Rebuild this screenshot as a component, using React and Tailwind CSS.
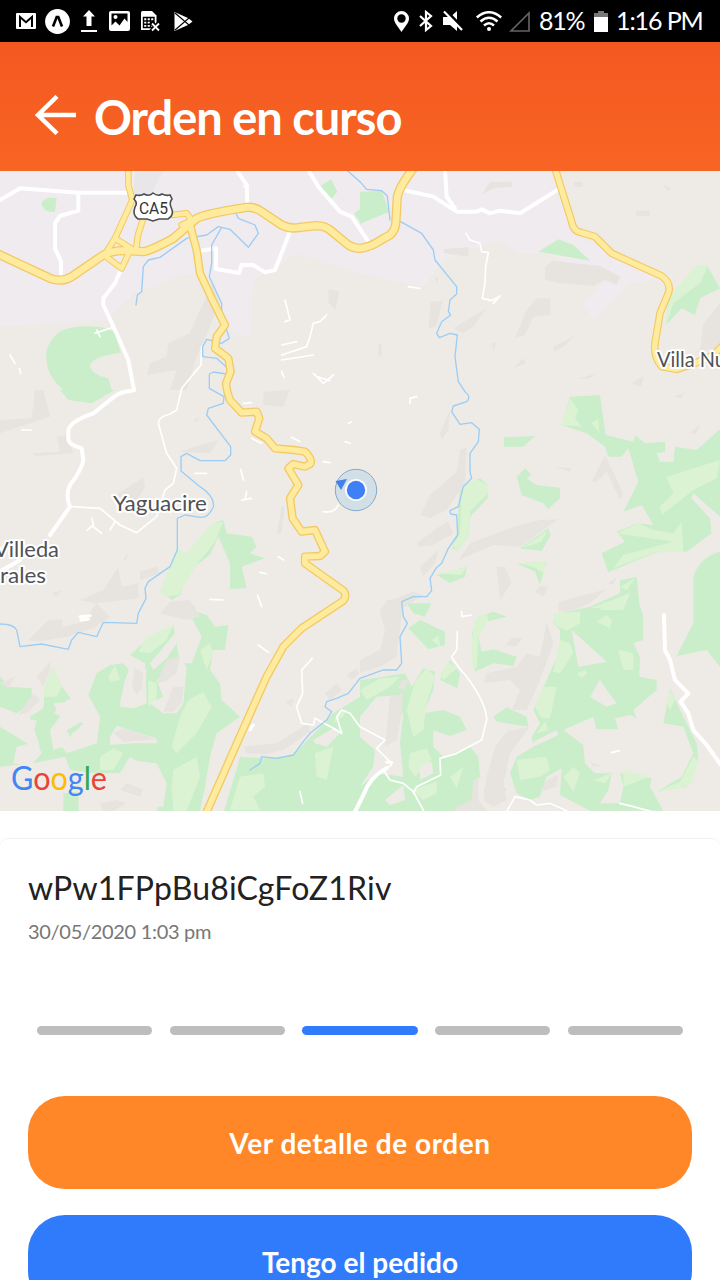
import React from "react";

/* Map sectors are drawn in thirds of a pixel, each with its own origin. */
const Sector = ({ x = 0, y = 0, children }) => <g transform={`translate(${x} ${y})`}>{children}</g>;

const G = ({ d }) => <path d={d} fill="#caeeca" />;
const L = ({ d }) => <path d={d} fill="#dbf3d3" />;
const S = ({ d }) => <path d={d} fill="#e7e3df" />;
const B = ({ d }) => <path d={d} fill="#eeebe7" />;

function Terrain() {
  return (
    <>
      <Sector>
        <path fill="#efebef" d="M0 0H1680L1720 190L1840 260L2030 320L1890 340L1780 450L1750 400L1820 330L1640 250L1560 250L1500 210L1330 270L1270 350L1080 310L890 250L760 330L750 500L670 480L640 330L560 310L400 370L320 450L0 470Z" />
        <path fill="#e8e6e8" d="M405 0H490L455 70L400 75Z" />
        <S d="M640 340L660 400L590 560L560 660H510L530 600L440 615L450 580L500 560L505 520L570 490L590 440ZM985 358L1018 365L1005 420L985 395Z" />
        <G d="M140 540Q160 480 220 472Q310 460 345 490L362 548Q270 560 270 590Q280 615 325 625L335 660H190Q130 610 140 540ZM124 100Q140 75 170 85L165 125Q130 130 124 100ZM958 50L993 28L1012 65L990 92ZM1062 130L1080 118V155Z" />
      </Sector>
      <Sector x={1080}>
        <G d="M0 65L65 62L88 125L0 162ZM535 245L595 208L640 225L690 272L610 258ZM918 465L925 385L1010 290L1040 285L1080 355L1020 385L1005 435L965 415Z" />
        <L d="M918 465L928 380L1010 285L1045 285L1020 340L940 400Z" />
        <S d="M365 75L390 35L455 35L455 50L400 55ZM250 238L325 232L325 260L255 250ZM555 290L580 273L720 288L780 320L770 345L735 330L700 348L600 340L555 330ZM825 122H870V138H830ZM205 475L212 395L248 392L228 470ZM280 475L380 415L340 470L310 490ZM500 420L530 385H570L572 435L520 440L495 495L465 503ZM580 530L648 495L610 530L580 545ZM460 595L490 565L497 580ZM650 628L710 610L690 625ZM815 640L850 618L845 650ZM1020 540L1030 460L1080 400V530L1000 550Z" />
        <S d="M395 520L410 515L400 545ZM55 525L65 520V560H55ZM225 320L235 325L230 345ZM640 35H668V50H645ZM905 45L935 55L925 62Z" />
      </Sector>
      <Sector y={660}>
        <G d="M180 0H345L275 40L205 30ZM485 600L500 560L640 400L670 390L680 430L755 440L770 470L750 490L795 505L725 530L740 595L690 597L690 520L655 440L630 495L590 525L560 560L540 615L515 630Z" />
        <L d="M480 605L530 475L560 490L635 400L670 395L645 455L585 530L535 615L495 620Z" />
        <S d="M0 90L95 85L105 0H130L150 80L90 100L0 130ZM95 190L180 185L170 140L200 135L220 190L110 198ZM340 320L430 262L435 290L405 340ZM540 185L600 165L655 150L630 190ZM790 5L870 0L850 50L790 45ZM240 630L310 600L355 530L365 590L415 580L415 625L290 640ZM420 570L420 545L470 530L480 550ZM155 610L185 600L170 620ZM830 435L845 350L855 350L845 425ZM370 510L385 485L380 510ZM580 90L600 80L590 95ZM500 660L560 630L590 655Z" />
      </Sector>
      <Sector x={1080} y={660}>
        <G d="M605 105L630 20L720 15L737 135L820 155L825 135L855 160L915 155L915 185L890 190L900 215H940L945 170L1010 180L1080 118V380L1000 310L1055 385L1055 430L980 485L890 487L745 547L725 490L795 455L770 425L830 400L880 405L845 345L790 365L835 275L805 175L785 200H745L735 170L680 130ZM432 142L525 138L490 170H432ZM470 260L495 235L515 255L500 265L530 285L600 293L600 325L565 358L550 340L485 315ZM300 290L360 265L385 285L383 325L330 380L325 440L295 480L275 475L290 440ZM480 475L565 415L572 435L545 483ZM470 520L560 515L540 585L525 545ZM230 555L320 530L315 560L270 580ZM1000 560Q1020 500 1080 485V830L1040 780L950 798L1000 700ZM690 650L780 610L780 570L830 560L838 640L850 680V750L820 760L840 800L838 860L890 870V900L820 960L830 985L810 975L765 985L775 1018H710L700 980L610 1020L670 1065L675 1120L705 1150L755 1150L745 1200L720 1240L780 1240L790 1190L780 1150L875 1165L870 1190L910 1262H690L600 1215L605 1135L560 1160L540 1220L510 1230L470 1210L450 1150L470 1100L520 1070L515 1040L540 1000L520 960L600 780L600 720L580 700L600 670Z" />
        <L d="M605 105L630 25L655 60L645 85L665 110ZM695 100L715 85L718 130ZM920 260L1080 210L1070 265L1000 300L905 375L900 350L940 310ZM770 430L835 400L880 420L940 430L965 395L970 487L890 485L760 535L790 495L940 455ZM305 290L350 268L385 285L383 310L330 365L325 440L295 480L278 470L300 430ZM485 475L565 420L545 455ZM470 520L558 515L550 550L520 530ZM235 550L318 532L305 555ZM690 655L760 630L780 650ZM780 590L825 565L800 600Z" />
        <B d="M635 720L740 815L655 830ZM720 870L755 920L770 940L740 950L690 920ZM1000 310L1060 385L1070 410L1055 430L1050 385L995 325ZM520 1055L590 1020L595 1035L520 1070Z" />
        <L d="M600 750L630 760L640 790L600 850L580 845ZM580 670L660 665L660 700L620 722L585 705ZM710 695L740 675L755 690L750 715ZM775 780L820 790L820 840L790 840ZM525 950L550 890L590 890L570 985L545 985ZM650 850L675 840L680 850L665 865ZM470 1110L560 1100L570 1140L540 1160L480 1170ZM610 1160L640 1130L660 1150L640 1205ZM700 1170L755 1150L735 1180ZM790 1140L870 1160L790 1190ZM730 640L810 610L790 660H720Z" />
        <S d="M295 510L330 460L460 410L540 390L595 388L480 470L400 465ZM170 460L230 415L265 395L280 430L220 465L175 470ZM180 375L210 315L290 245L300 180L320 170L315 280L260 360L210 385ZM180 530L235 480L225 520L190 560ZM240 130L270 60L265 120L245 150ZM585 230L635 235L630 245ZM695 275L735 195L790 310L780 330L740 245L710 275ZM595 635L740 598L690 640L630 665H595ZM940 20L975 8L965 25ZM990 130L1020 102L1010 130ZM410 530L435 530L455 580L420 630ZM60 660L80 635L160 605L190 615L120 660ZM525 605L540 588L565 590L550 620ZM745 580L770 560L760 585Z" />
      </Sector>
      <Sector y={1290}>
        <G d="M0 230L30 260L95 265L95 310L50 340L0 320ZM0 380L50 410L80 430L120 440L90 350L130 325L135 260L160 200L180 250L218 305L160 310L180 350L150 390L160 450L220 430L200 390L250 362L255 375L215 400L210 440L290 430L300 350L265 285L290 220L330 195L370 190L395 220L370 280L360 320L400 325L440 310L435 190L390 165L440 120L520 75L530 130L540 190L575 190L605 110L560 25L620 45L645 80L685 75L675 150L640 150L630 210L660 250L665 300L720 350L650 400L630 470L615 560L600 633H470L490 550L440 500L390 470L360 520L280 520L210 510L195 470L100 490L0 500Z" />
        <L d="M415 155L440 110L520 75L500 120L450 160ZM130 270L160 200L185 260L170 290L135 290ZM325 230L345 195L360 240L330 245ZM565 300L610 275L635 320L590 400L530 460L515 440L540 350ZM520 510L590 470L600 530L560 633H520L515 560ZM300 470L340 445L370 460L340 510H300ZM600 150L630 130L640 160L620 210ZM445 240L470 250L470 300L445 320Z" />
        <B d="M375 240L390 200L440 210L430 290L390 325L360 310ZM450 190L500 130L525 100L530 130L500 175L460 210ZM470 240L540 170L560 200L550 310L530 340L490 340L450 310L490 290ZM160 340L200 300L265 290L300 350L290 430L200 460L185 440L250 370ZM0 330L50 360L110 360L100 400L50 410ZM50 440L110 425L125 460L90 500L40 490ZM330 410L350 378L470 415L470 430L400 430L330 435ZM380 480L470 490L500 550L490 620H330L300 570L350 530L390 520L440 540Z" />
        <G d="M720 470L800 475L880 465L1000 340L1080 290V640H670L700 540ZM190 580L235 575V633H190Z" />
        <B d="M940 420L1000 385L1020 400L980 440L945 430Z" />
        <L d="M720 530L790 520L795 560L760 590L780 630H690ZM945 460L1000 440L980 540L950 530ZM1010 345L1040 325L1030 350L1000 370Z" />
        <S d="M85 120L145 60L185 58L190 80L250 65L290 10L330 50L280 85L200 110L110 125ZM110 230L150 185L150 210L130 260ZM0 250L45 230L25 265ZM55 345L100 280L120 300L80 340ZM395 260L405 205L430 220L425 265L410 285ZM470 250L500 180L540 170L530 220L495 245ZM490 335L520 260L550 260L545 310L520 335ZM340 400L370 385L470 418L370 425ZM480 40L510 5L570 0L600 50L560 60ZM730 440L830 430L925 370L930 395L850 450L800 462L740 460ZM1040 225L1070 205L1078 220L1055 240ZM975 280L1010 250L1025 270L990 300ZM855 305L880 295L875 320ZM360 570L380 550L430 570L420 590ZM300 610L350 600L380 610L340 633H310Z" />
      </Sector>
      <Sector x={1080} y={1290}>
        <G d="M0 240L40 235L135 220L155 260L190 205L225 215L220 270L190 340L250 330L300 350L320 390L270 408L220 390L220 440L250 470L330 440L355 470L360 530L340 560L340 633H0V560L50 520L130 530L120 430L130 340L85 340L90 310L130 285L50 290L0 350ZM140 10H215L195 50L160 40ZM145 85L180 60L255 95L255 135L205 148ZM345 215L335 100L355 50L400 35L440 50L380 65L355 110L365 155L400 148L470 170L460 198L400 190ZM240 240L270 180L300 220L292 265ZM400 350L440 322L500 350L505 380L410 365ZM370 570L410 535L440 570L390 600ZM0 410L45 450L40 500L0 560ZM910 370L930 265L970 350L1010 430L1015 480L980 560L890 575L965 530L1000 460L970 380Z" />
        <L d="M335 120L345 55L380 42L385 60L355 110L350 205L335 195ZM140 330L165 245L200 205L225 230L200 310L190 390L160 410ZM0 270L60 235L120 230L90 260L20 300ZM150 460L200 445L215 480L165 530L145 500ZM155 570L230 545L230 580L190 600ZM270 530L310 500L290 565ZM920 310L930 270L945 300L930 330ZM890 575L960 545L1000 470L1015 480L995 550L960 565ZM240 220L265 185L290 205L250 240ZM215 120L235 105L240 140ZM530 400L555 365L565 390Z" />
        <B d="M75 600L130 555L135 600L90 615ZM180 500L215 485L220 520L180 540Z" />
        <S d="M60 40L80 0H130L110 170L60 200L0 218V180L60 150L75 90ZM370 250L380 220L470 200L500 160L540 170L560 65L580 130L540 240L500 330L455 330L480 270L450 240ZM435 135L455 115L490 112L465 140ZM380 530L405 440L440 395L510 380L450 460L430 550L440 600L400 620L370 600ZM540 575L560 540L595 525L590 560ZM75 440L90 290L130 280L125 340L110 420ZM335 600L340 540L355 530L355 600L380 633H280L300 615ZM115 265L125 240L145 240L135 270ZM700 500L690 485L730 500Z" />
      </Sector>
    </>
  );
}

const HIGHWAY = "M-10 250L150 325Q185 338 215 320L310 255Q340 240 380 242L430 245Q450 243 520 205L590 145Q620 130 740 112Q765 110 785 125L845 165Q870 178 900 172L950 167Q975 168 990 180L1045 225Q1060 235 1080 235Q1110 232 1140 212L1170 195Q1188 180 1188 150L1192 80Q1198 50 1240 -5";
const RAMPS = "M385 -5V45L397 90L345 205L318 248M345 205L400 240M318 260L365 295L387 248M430 145L414 195L408 240M515 135L560 130L575 150L545 165";
const SOUTH = "M570 165L590 240L600 310L635 385L675 465L650 500L645 535L685 565L692 605L678 640L682 665L690 690L725 728L770 725L778 745L765 785L800 805L825 835L880 840L915 845Q940 870 930 882L915 890L880 882L865 895L895 945L870 985L878 1045L905 1085L945 1080L975 1145L960 1158L915 1160L915 1180L1030 1262Q1042 1275 1030 1292L905 1375L850 1430L800 1520L735 1665L618 1930";
const EAST = "M1665 -5L1715 155Q1720 185 1745 188L1785 200L1835 250L1985 318Q2015 340 2005 370L1980 430L1965 520Q1960 560 1985 590L2030 598L2080 582L2140 555L2170 525";

function Roads() {
  return (
    <g fill="none" strokeLinejoin="round" strokeLinecap="round">
      <g stroke="#fff" strokeWidth="12">
        <path d="M0 90L60 55L235 68L385 68M235 75L235 122L180 138L165 160V235L183 275V315M710 0L740 45L742 100M925 0L955 50L1020 125L1055 140L1085 185L1105 215M603 242L648 235V297L717 309L725 285L760 285L795 307L825 300L868 190M363 298L345 340L310 385L310 405L345 480L385 570L402 660L395 662Q360 665 340 682L280 730Q205 755 205 785V810Q210 825 245 835L250 870Q245 900 210 945Q195 975 210 1010L150 1095M0 1205L60 1170M1210 60L1300 80L1370 125L1430 125L1445 118L1470 130L1500 122L1560 130L1600 105L1680 55M1335 0L1340 80L1365 115" />
        <path d="M1992 1335L1995 1440L2010 1470L2025 1530L2065 1570L2042 1595L2065 1630L2080 1680L2120 1725L2170 1795M1160 1795Q1110 1820 1090 1875L1065 1925" />
      </g>
      <g stroke="#fff" strokeWidth="5">
        <path d="M340 472L285 490M290 480L300 500M605 530L603 585L545 655L530 720L510 732Q475 740 475 760L500 850L530 895L520 940L495 960L470 1040L410 1088L360 1065L300 1015L215 1010M262 1080L280 1065L275 1045M280 1070L305 1090M330 1080L345 1055M855 390L870 450L855 455M980 435L960 455L940 460L930 500L920 530L845 555M845 525L890 515M845 570L940 555M940 610L970 640L1000 615M950 620L990 632M1398 190L1410 210L1440 220L1445 245L1465 248L1457 290L1455 340L1447 385L1475 392L1500 378L1480 400M1225 350L1260 355M970 1025Q1005 1030 1015 1005M630 1288L670 1290M772 1275L785 1310M775 1425L805 1447M722 898L730 930M740 965L735 990M730 50L745 45M937 1465L905 1500L908 1570L890 1610L905 1660L940 1665L945 1645L1000 1675L1025 1690M1025 1690L1010 1640L1025 1620L1050 1630L1080 1670L1155 1710L1130 1735L1165 1770L1175 1785L1150 1800L1170 1830L1210 1840L1240 1865L1275 1930M1372 1385L1370 1440L1355 1460Q1365 1480 1400 1520Q1460 1600 1460 1650L1445 1710L1370 1750L1320 1765L1322 1815L1250 1850L1240 1870M1385 1325V1340L1415 1335M1520 1925L1545 1880L1590 1890L1610 1905L1650 1900L1700 1922M1860 1900L1900 1910L1955 1925M1835 1748L1858 1742M65 780H95M585 910H620M900 1865L908 1900" />
        <path d="M730 700L755 698M755 805L785 820M875 802L900 815M30 555L45 580M58 595L62 610M1045 760L1055 755M1035 815L1050 820M725 990L755 985M835 1160L850 1170M780 1207L800 1212M970 875L990 878M1230 700V685L1250 680M845 605L852 622" />
        <path strokeWidth="9" d="M240 1340L270 1337M243 1350L265 1348M750 1680L760 1665M1160 1777H1175" />
      </g>
      <g stroke="#9ccdf4" strokeWidth="4">
        <path d="M408 405L412 375L425 365L430 290L445 270L480 262L560 205L620 195L655 170L690 178L745 232L775 190L765 165L715 145L708 130M665 172L635 225L635 280L628 320L665 400L665 430M680 480L688 505L665 520L620 508L608 530L608 560L650 565L678 590M680 612L640 606L628 612V655L672 680L670 700L625 715L620 735L692 830V855L675 872H600L560 850L543 860V903L600 950Q645 980 640 1010Q625 1045 600 1042L555 1035L532 1045V1140L510 1190L445 1235L435 1255L438 1285L415 1330L410 1360L310 1357L290 1400L235 1387L215 1410L205 1438L125 1422L60 1430L50 1380Q40 1362 0 1362" />
        <path d="M1040 0L1080 35L1100 58L1145 62L1162 78L1170 150M1202 155L1265 190L1300 240L1305 270L1370 350V372L1350 390L1345 425L1352 435L1325 455L1310 490L1318 503L1350 490L1372 495L1365 560L1375 635L1395 665Q1415 680 1400 695L1360 708L1355 725L1380 763L1415 758L1438 778L1435 815L1410 850V905L1415 925L1390 950L1375 1010L1350 1022L1352 1032L1370 1035L1373 1095L1345 1135L1325 1180L1308 1195L1290 1225L1295 1262L1280 1280L1240 1280L1205 1295L1210 1340L1222 1360L1200 1400L1205 1480L1190 1500L1150 1500L1080 1525L1045 1570L1010 1585L980 1595L975 1610L995 1625L980 1650L930 1690L910 1715L880 1755L830 1765L785 1760L780 1780L750 1800" />
      </g>
      <g stroke="#f4c964">
        <path strokeWidth="20" d={RAMPS} />
        <path strokeWidth="28" d={HIGHWAY} />
        <path strokeWidth="25" d={SOUTH} />
        <path strokeWidth="23" d={EAST} />
      </g>
      <g stroke="#feeb9d">
        <path strokeWidth="14" d={RAMPS} />
        <path strokeWidth="20" d={HIGHWAY} />
        <path strokeWidth="17" d={SOUTH} />
        <path strokeWidth="16" d={EAST} />
      </g>
    </g>
  );
}

function MapView() {
  return (
    <svg className="block h-[640px] w-full shrink-0" viewBox="0 171 720 640">
      <rect y="171" width="720" height="640" fill="#eeebe7" />
      <g transform="translate(0 170) scale(0.33333)">
        <Terrain />
        <Roads />
      </g>
      <path d="M136 195q5 1 8-1q5 3 9-1q5 4 9 1q4 2 8 1l2 4q-3 4-1 8q4 8-3 12l-9 0l-6 2l-6-2l-9 0q-6-4-3-12q3-4-1-8z" fill="#fff" stroke="#4b4f53" strokeWidth="1.6" />
      <text x="139" y="214" textLength="29" lengthAdjust="spacingAndGlyphs" fontFamily="Roboto, sans-serif" fontSize="16" fill="#333">CA5</text>
      <g fontFamily="Lato, sans-serif" fontSize="21" fill="#505255" stroke="#fff" strokeWidth="4" strokeLinejoin="round" style={{ paintOrder: "stroke" }}>
        <text x="113" y="511" textLength="94" lengthAdjust="spacingAndGlyphs">Yaguacire</text>
        <text x="-6" y="557" textLength="65" lengthAdjust="spacingAndGlyphs">Villeda</text>
        <text x="0" y="583" textLength="46" lengthAdjust="spacingAndGlyphs">rales</text>
        <text x="657" y="367" textLength="69" lengthAdjust="spacingAndGlyphs">Villa Nu</text>
      </g>
      <circle cx="356" cy="490" r="20.7" fill="#b8d3e6" fillOpacity=".5" stroke="#86aac8" />
      <path d="M335.5 481l11.5-2l-6 11z" fill="#4380ea" />
      <circle cx="356" cy="490" r="11" fill="#fff" fillOpacity=".9" />
      <circle cx="356" cy="490" r="9.2" fill="#3f80f7" />
      <text x="11" y="790" textLength="96" lengthAdjust="spacingAndGlyphs" fontFamily="Lato, sans-serif" fontSize="32" fontWeight="400" strokeLinejoin="round">
        <tspan fill="#4285f4">G</tspan><tspan fill="#ea4335">o</tspan><tspan fill="#fbbc05">o</tspan><tspan fill="#4285f4">g</tspan><tspan fill="#34a853">l</tspan><tspan fill="#ea4335">e</tspan>
      </text>
    </svg>
  );
}

function NotificationIcons() {
  return (
    <div className="flex items-center gap-[9px]">
      <svg className="h-4 w-5" viewBox="0 0 20 16"><rect width="20" height="16" rx="1" fill="#fff" /><path d="M4 14V4l6 5.200L16 4v10" fill="none" stroke="#000" strokeWidth="2" /><path d="M5 14V7.500l5 4.300 5-4.300V14z" fill="#fff" /></svg>
      <svg className="h-[25px] w-[25px]" viewBox="0 0 25 25"><circle cx="12.500" cy="12.500" r="12.400" fill="#fff" /><path d="M8 17.500L11.700 8h1.600l3.700 9.500" fill="none" stroke="#000" strokeWidth="2.600" /></svg>
      <svg className="ml-[2px] h-[22px] w-4" viewBox="0 0 16 22" fill="#fff"><path d="M8 0l6 6.500h-3.500V16h-5V6.500H2zM0 20h16v2H0z" /></svg>
      <svg className="ml-[3px] h-5 w-[21px]" viewBox="0 0 21 20"><rect width="21" height="20" rx="2" fill="#fff" /><path d="M2.500 2.500h16V11l-3-3.500-5 7-4-4-4 4z" fill="#000" /><circle cx="6.500" cy="6" r="2" fill="#fff" /></svg>
      <svg className="ml-[2px] h-[21px] w-[19px]" viewBox="0 0 19 21"><path d="M0 1.500Q0 0 1.500 0H11l4.500 4.500V19H0z" fill="#fff" /><path d="M2.500 6.500H13v10H2.500zM6 6.500v10M9.500 6.500v10M2.500 10H13M2.500 13.200H13" fill="none" stroke="#000" strokeWidth="1.400" /><path d="M10 11l9 9.500M19 11l-9 9.500" stroke="#000" strokeWidth="4.500" /><path d="M11 12.500l7 7M18 12.500l-7 7" stroke="#fff" strokeWidth="1.800" /></svg>
      <svg className="ml-[5px] h-[19px] w-[19px]" viewBox="0 0 19 19"><path d="M.5 0L14 6l4.500 3.500L14 13 .5 19z" fill="#fff" /><path d="M1 1l14 12M1 18L15 6" stroke="#000" strokeWidth="1.100" /></svg>
    </div>
  );
}

function SystemIcons() {
  return (
    <div className="flex items-center text-white">
      <svg className="h-[21px] w-[15px]" viewBox="0 0 15 21"><path d="M7.500 0A7.500 7.500 0 0 1 15 7.500C15 12 10.500 16 7.500 21 4.500 16 0 12 0 7.500A7.500 7.500 0 0 1 7.500 0z" fill="#fff" /><circle cx="7.500" cy="7.500" r="4.200" fill="#000" /></svg>
      <svg className="ml-[10px] h-[22px] w-[14px]" viewBox="0 0 14 22" fill="none" stroke="#fff" strokeWidth="2.200"><path d="M1 6l11 10-5 4V2l5 4L1 16" /></svg>
      <svg className="ml-[10px] h-[22px] w-[20px]" viewBox="0 0 20 22" fill="#fff"><path d="M0 7h7l7 7v7l-7-6H0zM14 1v9.500L9 5.500z" /><path d="M4 1l17 17.500" stroke="#000" strokeWidth="2" /><path d="M1 1.500l18 18.500" stroke="#fff" strokeWidth="2.200" /></svg>
      <svg className="ml-[13px] h-[21px] w-[26px]" viewBox="0 0 26 21" fill="none" stroke="#fff" strokeWidth="2.500"><path d="M.8 6.500Q13-4 25.200 6.500M4.500 10.500Q13 3 21.500 10.500M8 14.500Q13 10 18 14.500" /><circle cx="13" cy="18" r="2" fill="#fff" stroke="none" /></svg>
      <svg className="ml-[7px] h-[21px] w-[21px]" viewBox="0 0 21 21" fill="none" stroke="#666" strokeWidth="1.600"><path d="M2 20H20V2z" /></svg>
      <span className="ml-[9px] w-[48px] whitespace-nowrap text-[25px] tracking-[-1.200px]">81%</span>
      <svg className="ml-[7px] h-[21px] w-[14px]" viewBox="0 0 14 21"><path d="M4 0h6v2h4v4H0V2h4z" fill="#777" /><path d="M0 6h14v15H0z" fill="#fff" /></svg>
      <span className="ml-[8px] w-[86px] whitespace-nowrap text-[25px] tracking-[-1.100px]">1:16 PM</span>
    </div>
  );
}

const STEPS = [false, false, true, false, false];

export default function App() {
  return (
    <div className="flex h-[1280px] w-[720px] flex-col overflow-hidden bg-white font-['Lato',sans-serif]">
      <div className="flex h-[42px] shrink-0 items-center justify-between bg-black pl-4 pr-[18px]">
        <NotificationIcons />
        <SystemIcons />
      </div>
      <header className="flex h-[129px] shrink-0 items-center bg-linear-to-b from-[#f45821] to-[#f86523] pl-[35px] pt-[19px] text-white">
        <svg className="mb-[3px] h-[40px] w-[41px]" viewBox="0 0 41 40" fill="none" stroke="#fff" strokeWidth="4.500"><path d="M22 1.500L3 20l19 18.500M3 20H41" /></svg>
        <h1 className="ml-[18px] mt-[3px] whitespace-nowrap text-[47px] font-bold leading-none tracking-[-1px]">Orden en curso</h1>
      </header>
      <MapView />
      <main className="mt-[27px] shrink-0 rounded-t-lg border-t border-[#f2f2f2] px-7 pt-[28px]">
        <h2 className="whitespace-nowrap text-[32px] leading-[42px] tracking-[0.200px] text-[#222]">wPw1FPpBu8iCgFoZ1Riv</h2>
        <p className="mt-[8px] text-[20px] leading-[28px] tracking-[-0.300px] text-[#777]">30/05/2020 1:03 pm</p>
        <div className="mt-[81px] flex gap-[17.300px] px-[9px]">
          {STEPS.map((active, i) => (
            <div key={i} className={active ? "h-[9px] flex-1 rounded-full bg-[#307bfc]" : "h-[9px] flex-1 rounded-full bg-[#bdbdbd]"} />
          ))}
        </div>
        <button className="mt-[61px] block h-[93px] w-full rounded-[37px] bg-[#ff8727] text-[28px] font-bold tracking-[0.550px] text-white">Ver detalle de orden</button>
        <button className="mt-[26px] block h-[93px] w-full rounded-[37px] bg-[#307bfc] text-[28px] font-bold text-white">Tengo el pedido</button>
      </main>
    </div>
  );
}
